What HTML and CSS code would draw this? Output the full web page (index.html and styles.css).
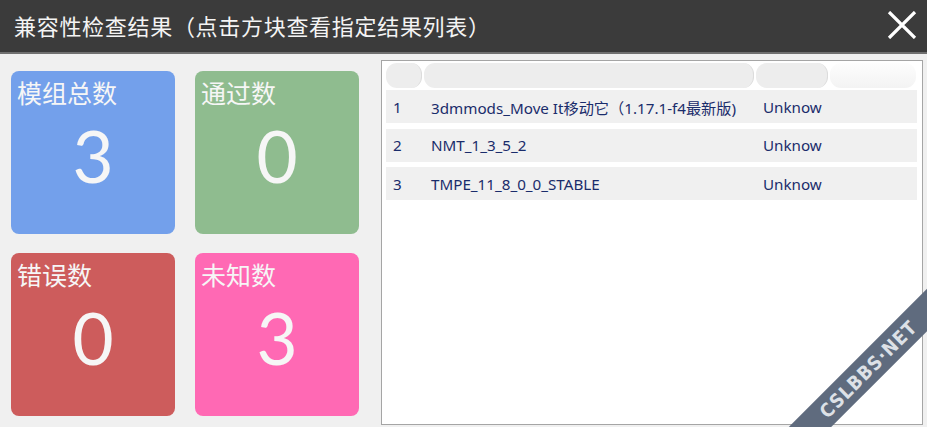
FILE: index.html
```html
<!DOCTYPE html>
<html lang="zh-CN">
<head>
<meta charset="utf-8">
<title>兼容性检查结果</title>
<link rel="stylesheet" href="styles.css">
</head>
<body>
<header class="titlebar">
  <h1 class="title">兼容性检查结果（点击方块查看指定结果列表）</h1>
  <button class="close" aria-label="关闭">
    <svg viewBox="0 0 30 28" width="30" height="28"><path d="M2 1 L28 27 M28 1 L2 27" stroke="#fff" stroke-width="3.2" fill="none"/></svg>
  </button>
</header>
<main class="main">
  <section class="cards">
    <div class="card blue"><div class="card-title">模组总数</div><div class="card-num">3</div></div>
    <div class="card green"><div class="card-title">通过数</div><div class="card-num">0</div></div>
    <div class="card red"><div class="card-title">错误数</div><div class="card-num">0</div></div>
    <div class="card pink"><div class="card-title">未知数</div><div class="card-num">3</div></div>
  </section>
  <section class="panel">
    <div class="thead">
      <div class="th"></div>
      <div class="th"></div>
      <div class="th"></div>
      <div class="th th-last"></div>
    </div>
    <div class="row"><div class="cell">1</div><div class="cell">3dmmods_Move It移动它（1.17.1-f4最新版)</div><div class="cell">Unknow</div><div class="cell"></div></div>
    <div class="row"><div class="cell">2</div><div class="cell">NMT_1_3_5_2</div><div class="cell">Unknow</div><div class="cell"></div></div>
    <div class="row"><div class="cell">3</div><div class="cell">TMPE_11_8_0_0_STABLE</div><div class="cell">Unknow</div><div class="cell"></div></div>
  </section>
</main>
<div class="wm-clip"><div class="watermark">CSLBBS·NET</div></div>
</body>
</html>
```
FILE: styles.css
```css
html, body {
  margin: 0;
  padding: 0;
}
body {
  width: 927px;
  height: 427px;
  overflow: hidden;
  position: relative;
  background: #f0f0f0;
  font-family: "Noto Sans", "Noto Sans CJK SC", sans-serif;
}
.titlebar {
  height: 52px;
  background: #3b3b3b;
  border-bottom: 2px solid #707070;
  display: flex;
  align-items: center;
  justify-content: space-between;
  padding: 0 10px 0 14px;
}
.title {
  margin: 0;
  font-family: "Noto Sans CJK SC", sans-serif;
  font-weight: 400;
  font-size: 22px;
  color: #f4f4f4;
  letter-spacing: 0.7px;
  line-height: 1;
  padding-bottom: 2px;
}
.close {
  background: none;
  border: 0;
  padding: 0;
  width: 30px;
  height: 28px;
  display: flex;
  margin-bottom: 2px;
}
.main {
  display: flex;
  align-items: flex-start;
  padding: 6px 0 0 11px;
}
.cards {
  display: grid;
  grid-template-columns: 164px 164px;
  grid-template-rows: 163px 163px;
  column-gap: 20px;
  row-gap: 19px;
  margin-top: 11px;
}
.card {
  border-radius: 8px;
  color: #f6f6f6;
  display: flex;
  flex-direction: column;
}
.blue { background: #73a0eb; }
.green { background: #8fbc8f; }
.red { background: #cd5c5c; }
.pink { background: #ff69b4; }
.card-title {
  font-family: "Noto Sans CJK SC", sans-serif;
  font-size: 25px;
  line-height: 1;
  padding: 9px 0 0 6px;
}
.card-num {
  font-family: "Lato", "Noto Sans", sans-serif;
  font-weight: 400;
  font-size: 71px;
  line-height: 1;
  text-align: center;
  padding-top: 15px;
}
.panel {
  margin-left: 22px;
  width: 532px;
  height: 359px;
  background: #fff;
  border: 1px solid #a5a5a5;
  padding: 2px 4px;
  display: flex;
  flex-direction: column;
}
.thead {
  display: grid;
  grid-template-columns: 36px 330px 72px 86px;
  column-gap: 2px;
  height: 25px;
  margin-bottom: 2px;
}
.th {
  background: #ededed;
  border-radius: 11px;
  border-right: 1px solid #dcdcdc;
}
.th-last {
  background: linear-gradient(#fdfdfd, #f3f3f3);
  border-right: 0;
}
.row {
  display: grid;
  grid-template-columns: 38px 332px 74px 1fr;
  height: 33px;
  align-items: center;
  background: #f0f0f0;
  margin-bottom: 5.5px;
  margin-right: 1px;
  font-size: 15.2px;
  color: #1a2c6b;
}
.cell {
  padding-left: 7px;
  white-space: nowrap;
}
.wm-clip {
  position: absolute;
  left: 727px;
  top: 227px;
  width: 200px;
  height: 200px;
  overflow: hidden;
}
.watermark {
  position: absolute;
  left: -59px;
  top: 127px;
  width: 400px;
  height: 30px;
  line-height: 30px;
  transform: rotate(-45deg);
  background: #5f6b7e;
  color: #dde1e7;
  text-align: center;
  font-family: "DejaVu Sans", sans-serif;
  font-weight: bold;
  font-size: 19px;
  letter-spacing: 1px;
  font-stretch: condensed;
}
```
